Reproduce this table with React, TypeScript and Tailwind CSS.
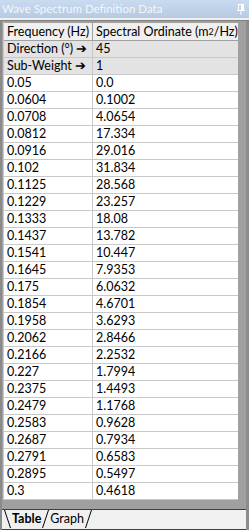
import React from "react";

const rows: [string, string][] = [
  ["0.05", "0.0"],
  ["0.0604", "0.1002"],
  ["0.0708", "4.0654"],
  ["0.0812", "17.334"],
  ["0.0916", "29.016"],
  ["0.102", "31.834"],
  ["0.1125", "28.568"],
  ["0.1229", "23.257"],
  ["0.1333", "18.08"],
  ["0.1437", "13.782"],
  ["0.1541", "10.447"],
  ["0.1645", "7.9353"],
  ["0.175", "6.0632"],
  ["0.1854", "4.6701"],
  ["0.1958", "3.6293"],
  ["0.2062", "2.8466"],
  ["0.2166", "2.2532"],
  ["0.227", "1.7994"],
  ["0.2375", "1.4493"],
  ["0.2479", "1.1768"],
  ["0.2583", "0.9628"],
  ["0.2687", "0.7934"],
  ["0.2791", "0.6583"],
  ["0.2895", "0.5497"],
  ["0.3", "0.4618"],
];

function Row({ a, b, bg }: { a: React.ReactNode; b: React.ReactNode; bg: string }) {
  return (
    <div className={`flex h-[17px] border-b border-[#c8c8c8] whitespace-nowrap ${bg}`}>
      <div className="w-[89px] shrink-0 border-r border-[#c8c8c8] pl-[3px] leading-[16px]">{a}</div>
      <div className="flex-1 pl-[3px] leading-[16px]">{b}</div>
    </div>
  );
}

function Slash({ dir }: { dir: "l" | "r" }) {
  return (
    <svg width="7" height="18" viewBox="0 0 7 18" className="shrink-0">
      {dir === "l" ? (
        <line x1="0.5" y1="0" x2="6.5" y2="18" stroke="#000" strokeWidth="1" />
      ) : (
        <line x1="6.5" y1="0" x2="0.5" y2="18" stroke="#000" strokeWidth="1" />
      )}
    </svg>
  );
}

export default function App() {
  return (
    <div
      className="w-[249px] h-[530px] bg-[#a0a0a0] flex flex-col text-[12.5px] text-black overflow-hidden"
      style={{ fontFamily: 'Lato, "Noto Sans", sans-serif' }}
    >
      <div className="h-[18px] shrink-0 bg-gradient-to-b from-[#c9dbef] to-[#b6cae2] flex items-center justify-between pl-[2px] pr-[4px]">
        <span className="text-[#f4f6f9] text-[11.5px] leading-[18px] whitespace-nowrap">Wave Spectrum Definition Data</span>
        <svg width="8" height="11" viewBox="0 0 8 11">
          <rect x="1.5" y="0.5" width="5" height="6" fill="none" stroke="#fff" />
          <rect x="4" y="1" width="2" height="5" fill="#fff" />
          <rect x="0" y="6" width="8" height="1" fill="#fff" />
          <rect x="3.5" y="7" width="1" height="4" fill="#fff" />
        </svg>
      </div>
      <div className="h-[3px] shrink-0 bg-[#f0f0f0] border-b border-[#808080]" />
      <div className="flex-1 flex flex-col border-l-2 border-[#8a8a8a] border-r-[3px] border-r-[#8c8c8c]">
        <div className="pl-[1px] pt-[1px] pr-[8px]">
          <div className="bg-white border-l border-[#c8c8c8]">
            <div className="flex h-[19px] bg-[#f0f0f0] border-t border-b border-[#a0a0a0] whitespace-nowrap">
              <div className="w-[89px] shrink-0 border-r border-[#a0a0a0] pl-[3px] leading-[17px]">Frequency (Hz)</div>
              <div className="flex-1 pl-[3px] leading-[17px] border-r border-[#a0a0a0]">
                Spectral Ordinate (m<sup className="text-[9px] relative -top-[1px]">2</sup>/Hz)
              </div>
            </div>
            <Row a="Direction (°) ➔" b="45" bg="bg-[#e3e3e3]" />
            <Row a="Sub-Weight ➔" b="1" bg="bg-[#e3e3e3]" />
            {rows.map(([a, b]) => (
              <Row key={a} a={a} b={b} bg="bg-white" />
            ))}
          </div>
        </div>
        <div className="flex-1" />
        <div className="h-[21px] shrink-0 bg-[#f0f0f0] border-t border-[#404040] border-b border-b-[#404040] flex items-start pl-[2px]">
          <Slash dir="l" />
          <span className="font-bold leading-[18px] px-[1px]">Table</span>
          <Slash dir="r" />
          <span className="leading-[18px] px-[1px]">Graph</span>
          <Slash dir="r" />
        </div>
      </div>
    </div>
  );
}
